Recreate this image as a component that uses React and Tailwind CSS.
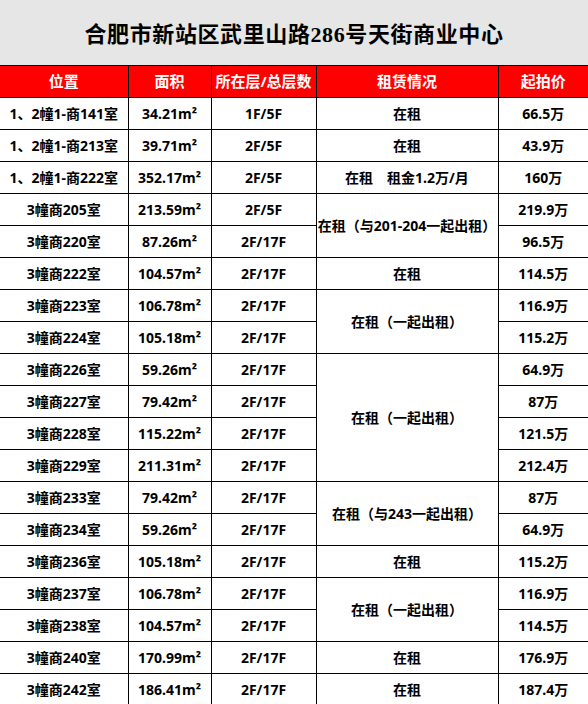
import React from 'react';

const rows = [
  { pos: '1、2幢1-商141室', area: '34.21', floor: '1F/5F', rent: '在租', span: 1, price: '66.5万' },
  { pos: '1、2幢1-商213室', area: '39.71', floor: '2F/5F', rent: '在租', span: 1, price: '43.9万' },
  { pos: '1、2幢1-商222室', area: '352.17', floor: '2F/5F', rent: '在租\u3000租金1.2万/月', span: 1, price: '160万' },
  { pos: '3幢商205室', area: '213.59', floor: '2F/5F', rent: '在租（与201-204一起出租）', span: 2, price: '219.9万' },
  { pos: '3幢商220室', area: '87.26', floor: '2F/17F', price: '96.5万' },
  { pos: '3幢商222室', area: '104.57', floor: '2F/17F', rent: '在租', span: 1, price: '114.5万' },
  { pos: '3幢商223室', area: '106.78', floor: '2F/17F', rent: '在租（一起出租）', span: 2, price: '116.9万' },
  { pos: '3幢商224室', area: '105.18', floor: '2F/17F', price: '115.2万' },
  { pos: '3幢商226室', area: '59.26', floor: '2F/17F', rent: '在租（一起出租）', span: 4, price: '64.9万' },
  { pos: '3幢商227室', area: '79.42', floor: '2F/17F', price: '87万' },
  { pos: '3幢商228室', area: '115.22', floor: '2F/17F', price: '121.5万' },
  { pos: '3幢商229室', area: '211.31', floor: '2F/17F', price: '212.4万' },
  { pos: '3幢商233室', area: '79.42', floor: '2F/17F', rent: '在租（与243一起出租）', span: 2, price: '87万' },
  { pos: '3幢商234室', area: '59.26', floor: '2F/17F', price: '64.9万' },
  { pos: '3幢商236室', area: '105.18', floor: '2F/17F', rent: '在租', span: 1, price: '115.2万' },
  { pos: '3幢商237室', area: '106.78', floor: '2F/17F', rent: '在租（一起出租）', span: 2, price: '116.9万' },
  { pos: '3幢商238室', area: '104.57', floor: '2F/17F', price: '114.5万' },
  { pos: '3幢商240室', area: '170.99', floor: '2F/17F', rent: '在租', span: 1, price: '176.9万' },
  { pos: '3幢商242室', area: '186.41', floor: '2F/17F', rent: '在租', span: 1, price: '187.4万' },
];

const headers = ['位置', '面积', '所在层/总层数', '租赁情况', '起拍价'];

export default function App() {
  return (
    <div className="w-[588px] h-[704px] overflow-hidden bg-white font-['Noto_Sans','Noto_Sans_CJK_SC',sans-serif]">
      {/* Title */}
      <div className="h-[66px] bg-[#e6e6e6] border-b border-black flex items-center justify-center pt-[4px]">
        <h1 className="text-[22px] font-bold text-black tracking-[0.6px] font-['Liberation_Serif','Noto_Sans_CJK_SC',serif]">
          合肥市新站区武里山路286号天街商业中心
        </h1>
      </div>

      {/* Table */}
      <table className="w-full table-fixed border-collapse border-hidden text-center font-bold">
        <colgroup>
          <col className="w-[128px]" />
          <col className="w-[83px]" />
          <col className="w-[105px]" />
          <col className="w-[182px]" />
          <col className="w-[90px]" />
        </colgroup>
        <thead>
          <tr className="h-[31px] bg-[#ff0000]">
            {headers.map((h) => (
              <th key={h} className="border border-black p-0 text-[15px] text-white font-bold">
                {h}
              </th>
            ))}
          </tr>
        </thead>
        <tbody>
          {rows.map((r) => (
            <tr key={r.pos} className="h-[32px] text-[14px] text-black">
              <td className="border border-black p-0">{r.pos}</td>
              <td className="border border-black p-0">{r.area}m²</td>
              <td className="border border-black p-0">{r.floor}</td>
              {r.rent && (
                <td rowSpan={r.span} className="border border-black p-0 whitespace-pre">
                  {r.rent}
                </td>
              )}
              <td className="border border-black p-0">{r.price}</td>
            </tr>
          ))}
        </tbody>
      </table>
    </div>
  );
}
